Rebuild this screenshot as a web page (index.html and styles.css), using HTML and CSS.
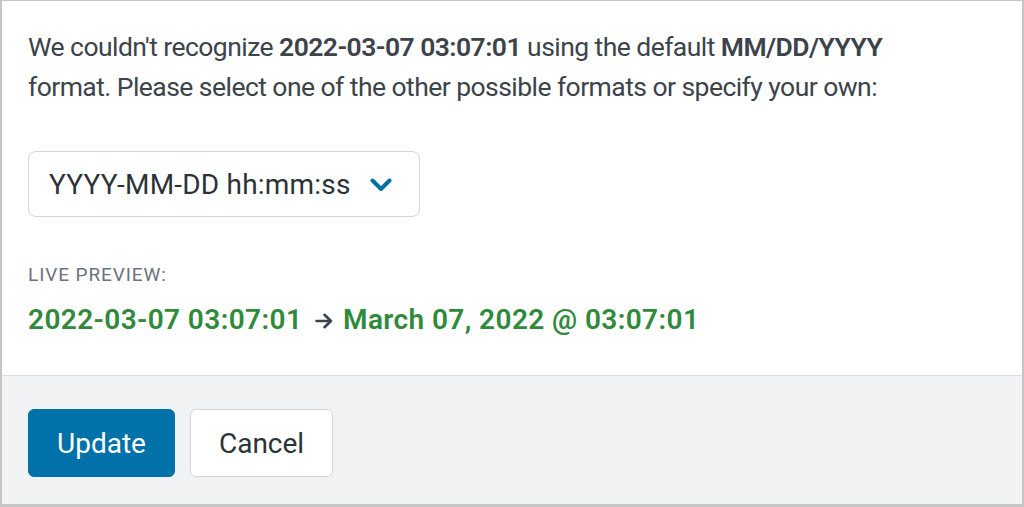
FILE: index.html
```html
<!DOCTYPE html>
<html lang="en">
<head>
    <meta charset="UTF-8">
    <meta name="viewport" content="width=device-width, initial-scale=1.0">
    <title>Date Format</title>
    <link rel="stylesheet" href="styles.css">
</head>
<body>

    <div class="dialog">
        <div class="dialog-body">
            <p class="message">
                We couldn't recognize <strong>2022-03-07 03:07:01</strong> using the default <strong>MM/DD/YYYY</strong><br>
                format. Please select one of the other possible formats or specify your own:
            </p>

            <div class="select">
                <span>YYYY-MM-DD hh:mm:ss</span>
                <svg class="chevron" width="22" height="14" viewBox="0 0 22 14">
                    <path d="M2.5 2.5 L11 11 L19.5 2.5" fill="none" stroke="#0071a1" stroke-width="4" stroke-linecap="round" stroke-linejoin="round"/>
                </svg>
            </div>

            <div class="preview-label">LIVE PREVIEW:</div>
            <div class="preview">
                <strong>2022-03-07 03:07:01</strong>
                <svg class="arrow" width="18" height="16" viewBox="0 0 18 16">
                    <path d="M1.5 8 H16 M9.5 1.8 L16 8 L9.5 14.2" fill="none" stroke="#3c434a" stroke-width="2.6" stroke-linecap="round" stroke-linejoin="round"/>
                </svg>
                <strong>March 07, 2022 @ 03:07:01</strong>
            </div>
        </div>

        <div class="dialog-footer">
            <button class="btn btn-primary">Update</button>
            <button class="btn">Cancel</button>
        </div>
    </div>

</body>
</html>
```

FILE: styles.css
```css
* {
    box-sizing: border-box;
}
body {
    margin: 0;
    font-family: Roboto, "Noto Sans", sans-serif;
    color: #3c434a;
}
.dialog {
    width: 1024px;
    height: 507px;
    border-style: solid;
    border-color: #c6c6c8;
    border-width: 1px 2px 3px 2px;
    display: flex;
    flex-direction: column;
}
.dialog-body {
    background: #fff;
    padding: 26px 26px 35px;
    border-bottom: 1px solid #dcdcde;
}
.message {
    margin: 0;
    font-size: 26.5px;
    letter-spacing: -0.55px;
    line-height: 40px;
    white-space: nowrap;
}
.message strong {
    font-weight: 600;
}
.select {
    margin-top: 44px;
    width: 392px;
    height: 66px;
    border: 1px solid #d5d6d8;
    border-radius: 8px;
    display: flex;
    align-items: center;
    justify-content: space-between;
    padding: 0 27px 0 20px;
    font-size: 28px;
    letter-spacing: 0.2px;
    color: #2c3338;
}
.chevron {
    display: block;
    margin-top: 2px;
}
.preview-label {
    margin-top: 46px;
    font-size: 19px;
    line-height: 24px;
    color: #6b7280;
    letter-spacing: 0.9px;
}
.preview {
    margin-top: 13px;
    font-size: 28px;
    letter-spacing: 0.4px;
    line-height: 40px;
}
.preview strong {
    color: #2f8a3c;
    font-weight: 600;
}
.preview .arrow {
    margin: 0 3px 0 5px;
    vertical-align: 0;
}
.dialog-footer {
    flex: 1;
    background: #f1f2f4;
    padding: 33px 26px 0;
    display: flex;
    align-items: flex-start;
    gap: 15px;
}
.btn {
    height: 68px;
    padding: 0 28px;
    font-family: inherit;
    font-size: 28px;
    color: #2c3338;
    background: #fff;
    border: 1px solid #d5d6d8;
    border-radius: 6px;
}
.btn-primary {
    background: #0071a9;
    border-color: #0071a9;
    color: #fff;
}
```
